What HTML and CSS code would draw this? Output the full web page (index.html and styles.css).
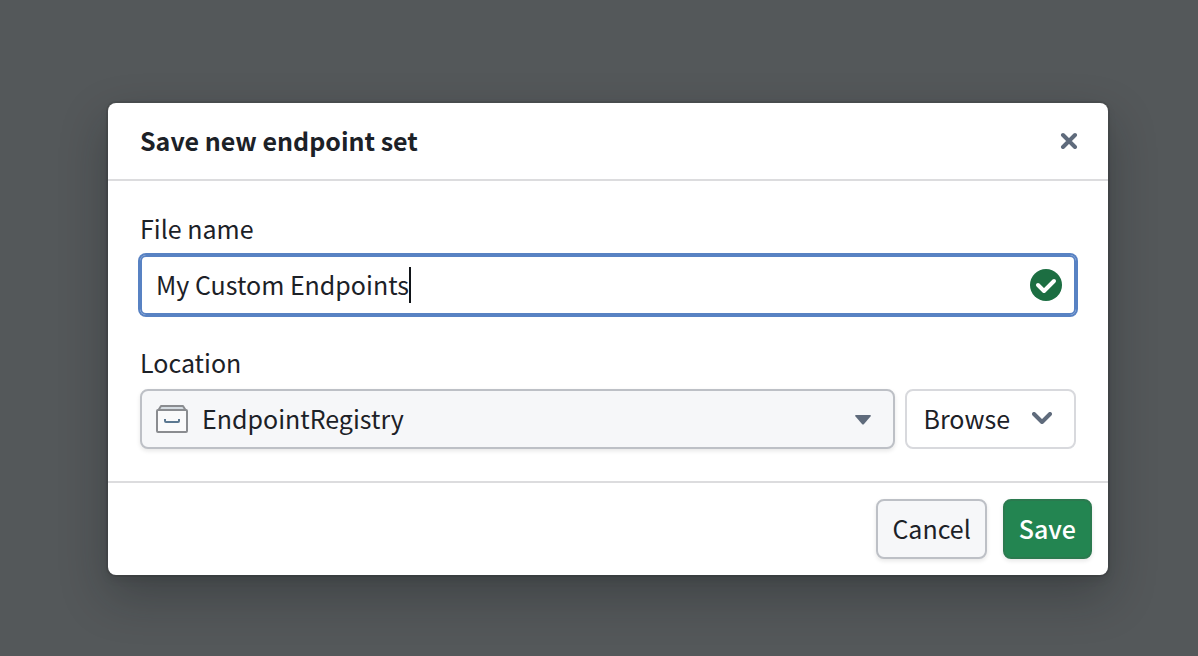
FILE: index.html
```html
<!DOCTYPE html>
<html lang="en">
<head>
  <meta charset="UTF-8">
  <meta name="viewport" content="width=device-width, initial-scale=1.0">
  <title>Save new endpoint set</title>
  <link rel="stylesheet" href="styles.css">
</head>
<body>
  <div class="backdrop">
    <form class="dialog" role="dialog" aria-labelledby="dialog-title">
      <header class="dialog-header">
        <h1 id="dialog-title">Save new endpoint set</h1>
        <button type="button" class="close-button" aria-label="Close">
          <svg width="18" height="18" viewBox="0 0 18 18">
            <path d="M3 4L15 16M15 4L3 16" fill="none" stroke="#5f6b7c" stroke-width="4" stroke-linecap="round"/>
          </svg>
        </button>
      </header>

      <div class="dialog-body">
        <div class="field">
          <label for="file-name">File name</label>
          <div class="text-box">
            <input type="text" id="file-name" value="My Custom Endpoints" spellcheck="false">
            <span class="caret"></span>
            <svg class="valid-icon" width="32" height="32" viewBox="0 0 32 32">
              <circle cx="16" cy="16" r="16" fill="#1c6e42"/>
              <path d="M8 16L14 22L24 12" fill="none" stroke="#fff" stroke-width="4" stroke-linecap="round" stroke-linejoin="round"/>
            </svg>
          </div>
        </div>

        <div class="field">
          <label for="location">Location</label>
          <div class="location-row">
            <div class="select-box">
              <svg class="registry-icon" width="32" height="28" viewBox="0 0 32 28">
                <path d="M2.500 5L5 1H27L29.500 5Z" fill="#d5dce2" stroke="#8a8c90" stroke-width="2" stroke-linejoin="round"/>
                <rect x="1" y="5" width="30" height="22" rx="1" fill="#fafafb" stroke="#8a8c90" stroke-width="2"/>
                <path d="M9 14V16Q9 17 10 17H22Q23 17 23 16V14" fill="none" stroke="#5c7891" stroke-width="2"/>
              </svg>
              <select id="location">
                <option>EndpointRegistry</option>
              </select>
              <svg class="select-arrow" width="16" height="10" viewBox="0 0 16 10">
                <path d="M1 0H15Q16.500 0 15.500 1.500L9 9Q8 10 7 9L0.500 1.500Q-0.500 0 1 0Z" fill="#5f6b7c"/>
              </svg>
            </div>
            <button type="button" class="button browse-button">
              Browse
              <svg width="20" height="12" viewBox="0 0 20 12">
                <path d="M2 2L10 10L18 2" fill="none" stroke="#5f6b7c" stroke-width="4" stroke-linecap="round" stroke-linejoin="round"/>
              </svg>
            </button>
          </div>
        </div>
      </div>

      <footer class="dialog-footer">
        <button type="button" class="button cancel-button">Cancel</button>
        <button type="submit" class="button save-button">Save</button>
      </footer>
    </form>
  </div>
</body>
</html>
```
FILE: styles.css
```css
* {
  margin: 0;
  padding: 0;
  box-sizing: border-box;
}

body {
  font-family: "Noto Sans CJK SC", "Noto Sans", sans-serif;
  font-size: 25px;
  line-height: 34px;
  color: #1c2127;
}

input,
select,
button {
  font: inherit;
  color: inherit;
}

svg {
  flex-shrink: 0;
}

.backdrop {
  min-height: 100vh;
  padding: 103px 90px 60px 108px;
  background: #54585a;
}

/* Dialog */
.dialog {
  background: #fff;
  border-radius: 8px;
  box-shadow: 0 0 0 2px rgba(17, 20, 24, 0.1), 0 4px 8px rgba(17, 20, 24, 0.1), 0 20px 48px rgba(17, 20, 24, 0.3);
}

.dialog-header {
  display: flex;
  align-items: center;
  justify-content: space-between;
  padding: 20px 30px 22px 32px;
  border-bottom: 2px solid #dcdcde;
}

.dialog-header h1 {
  font-size: 25px;
  font-weight: 600;
}

.close-button {
  display: flex;
  border: none;
  background: none;
  cursor: pointer;
}

.dialog-body {
  display: flex;
  flex-direction: column;
  gap: 30px;
  padding: 30px 32px 32px;
}

.field {
  display: flex;
  flex-direction: column;
  gap: 10px;
}

.field label {
  align-self: flex-start;
}

/* File name */
.text-box {
  display: flex;
  align-items: center;
  height: 60px;
  padding: 0 12px 0 14px;
  border: 2px solid #5882c3;
  border-radius: 6px;
  box-shadow: 0 0 0 2px #5882c3;
}

.text-box input {
  field-sizing: content;
  padding-bottom: 2px;
  border: none;
  outline: none;
  background: none;
  caret-color: transparent;
}

.caret {
  width: 2px;
  height: 36px;
  background: #111418;
}

.valid-icon {
  margin-left: auto;
}

/* Location */
.location-row {
  display: flex;
  gap: 10px;
}

.select-box {
  flex: 1;
  position: relative;
}

.select-box select {
  display: block;
  width: 100%;
  height: 60px;
  padding: 0 48px 2px 60px;
  appearance: none;
  border: 2px solid #bdc0c6;
  border-radius: 8px;
  background: #f6f7f9;
  box-shadow: 0 2px 4px rgba(17, 20, 24, 0.1);
}

.registry-icon,
.select-arrow {
  position: absolute;
  top: 16px;
  left: 16px;
  pointer-events: none;
}

.select-arrow {
  top: 26px;
  right: 24px;
  left: auto;
}

/* Buttons */
.button {
  display: flex;
  align-items: center;
  height: 60px;
  padding: 0 14px 2px;
  border: 2px solid #bdc0c6;
  border-radius: 8px;
  background: #f6f7f9;
  box-shadow: 0 2px 4px rgba(17, 20, 24, 0.1);
  cursor: pointer;
}

.browse-button {
  gap: 22px;
  padding: 0 22px 2px 16px;
  border-color: #d8d9dd;
  background: #fff;
  box-shadow: none;
}

.save-button {
  border-color: #2b7a4f;
  background: #238551;
  color: #fff;
  font-weight: 500;
}

.dialog-footer {
  display: flex;
  justify-content: flex-end;
  gap: 16px;
  padding: 16px;
  border-top: 2px solid #dcdcde;
}
```
